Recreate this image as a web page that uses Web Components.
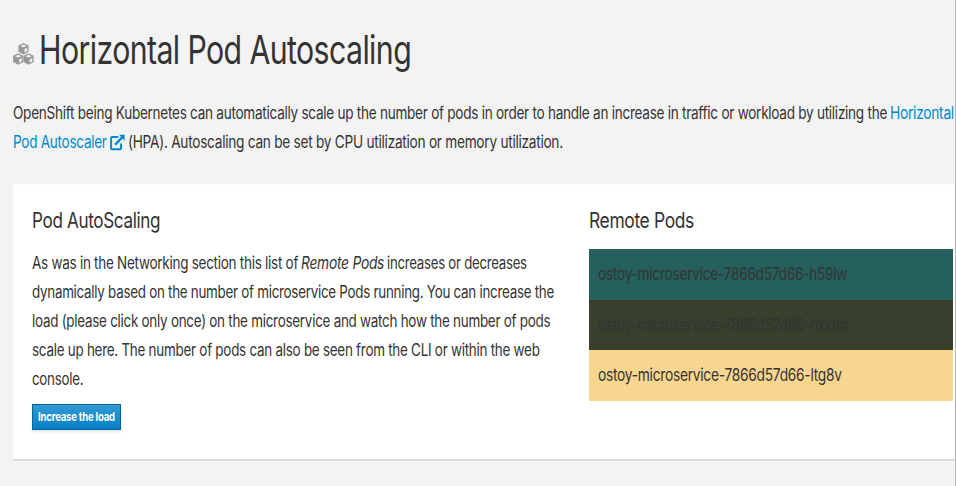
<!DOCTYPE html>
<html lang="en"><head><meta charset="utf-8"><title>Horizontal Pod Autoscaling</title>
<style>
html,body{margin:0;height:100%}
body{overflow:hidden;background:#f3f3f3;color:#333;font-family:Inter,"Liberation Sans",sans-serif}
</style></head><body>
<hpa-page></hpa-page>
<script>
// A run of text condensed horizontally to the width given in its "w" attribute.
class FitText extends HTMLElement{
  connectedCallback(){
    const r=this.attachShadow({mode:'open'});
    r.innerHTML='<style>:host{display:block;flex:none;white-space:nowrap;letter-spacing:-.02em}span{display:inline-block;transform-origin:0 50%}</style><span><slot></slot></span>';
    const w=parseFloat(this.getAttribute('w')),s=r.querySelector('span');
    this.style.width=w+'px';
    s.style.transform='scaleX('+w/s.offsetWidth+')';
  }
}
class CubesIcon extends HTMLElement{
  connectedCallback(){
    this.attachShadow({mode:'open'}).innerHTML=`<style>:host{display:block;flex:none}svg{display:block}</style>
<svg width="21" height="23" viewBox="0 0 21 23"><defs><g id="c"><path d="M5.2 0 10.3 2.4V8.8L5.2 11.5.1 8.8V2.4Z" fill="#989898"/><path d="M5.2 1.5 8.2 2.9 5.2 4.2 2.2 2.9Z" fill="#f3f3f3"/><path d="M6.2 6.1 8.9 4.8V7.9L6.2 9.4Z" fill="#f3f3f3"/></g></defs><use href="#c" x="5.3"/><use href="#c" y="10.3"/><use href="#c" x="10.4" y="10.3"/></svg>`;
  }
}
class ExternalIcon extends HTMLElement{
  connectedCallback(){
    this.attachShadow({mode:'open'}).innerHTML=`<style>:host{display:block;flex:none}svg{display:block}</style>
<svg width="15" height="17" viewBox="0 0 15 17" fill="none" stroke="#0088ce"><path d="M8.2 3H2.2Q1.1 3 1.1 4.2V14Q1.1 15.2 2.2 15.2H10Q11.1 15.2 11.1 14V9.6" stroke-width="2"/><path d="M5.1 10.8 12.3 3.1" stroke-width="2.4"/><path d="M9.1 .7H14.6V6.8Z" fill="#0088ce" stroke="none"/></svg>`;
  }
}
class PodRow extends HTMLElement{
  connectedCallback(){
    this.attachShadow({mode:'open'}).innerHTML=`<style>:host{display:block;box-sizing:border-box;padding-left:9px;font-size:17px;line-height:51px;background:var(--pod)}</style><slot></slot>`;
  }
}
class LoadButton extends HTMLElement{
  connectedCallback(){
    this.attachShadow({mode:'open'}).innerHTML=`<style>:host{display:block}button{display:block;box-sizing:border-box;width:89px;height:26px;padding:0 0 0 5px;border:1px solid #00659c;background:linear-gradient(#319bd6,#0580c6);color:#fff;font:700 11.8px/23px Inter,sans-serif;text-align:left;box-shadow:0 2px 3px rgba(3,3,3,.1)}</style><button><slot></slot></button>`;
  }
}
class InfoCard extends HTMLElement{
  connectedCallback(){
    this.attachShadow({mode:'open'}).innerHTML=`<style>:host{display:grid;grid-template-columns:556.5px 364px;box-sizing:border-box;width:942px;height:277px;padding:19px 0 0 19px;background:#fff;border-top:1px solid #fafafa;border-bottom:2px solid #dcdcdc;align-items:start}</style><slot name="left"></slot><slot name="right"></slot>`;
  }
}
class HpaPage extends HTMLElement{
  connectedCallback(){
    this.attachShadow({mode:'open'}).innerHTML=`<style>
:host{display:block;box-sizing:border-box;height:486px;padding:26px 0 0 13px;border-right:1px solid #b5b5b5;overflow:hidden}
h1,h2,p{margin:0;font-weight:400}
h1{display:flex;align-items:flex-start;gap:5px;height:73px;font-size:39px;line-height:47px}
cubes-icon{margin-top:17px}
.line{display:flex;gap:3px}
.intro{height:85px;font-size:17px;line-height:28.5px}
a{color:#0088ce;text-decoration:none;display:flex;gap:3px}
external-icon{margin-top:6px}
h2{font-size:21.5px;line-height:32px;height:45px}
.body{font-size:17px;line-height:29.1px}
.body .line{gap:3px}
i{font-style:italic}
load-button{margin-top:10px}
</style>
<h1><cubes-icon></cubes-icon><fit-text w="372">Horizontal Pod Autoscaling</fit-text></h1>
<div class="intro"><div class="line"><fit-text w="874">OpenShift being Kubernetes can automatically scale up the number of pods in order to handle an increase in traffic or workload by utilizing the</fit-text><a><fit-text w="64">Horizontal</fit-text></a></div>
<div class="line"><a><fit-text w="94">Pod Autoscaler</fit-text><external-icon></external-icon></a><fit-text w="434.5">(HPA). Autoscaling can be set by CPU utilization or memory utilization.</fit-text></div></div>
<info-card>
<div slot="left"><h2><fit-text w="128">Pod AutoScaling</fit-text></h2>
<div class="body">
<div class="line"><fit-text w="266">As was in the Networking section this list of</fit-text><fit-text w="83"><i>Remote Pods</i></fit-text><fit-text w="140">increases or decreases</fit-text></div>
<fit-text w="522">dynamically based on the number of microservice Pods running. You can increase the</fit-text>
<fit-text w="518">load (please click only once) on the microservice and watch how the number of pods</fit-text>
<fit-text w="508">scale up here. The number of pods can also be seen from the CLI or within the web</fit-text>
<fit-text w="51">console.</fit-text></div>
<load-button><fit-text w="77">Increase the load</fit-text></load-button></div>
<div slot="right"><h2><fit-text w="104.5">Remote Pods</fit-text></h2>
<div>
<pod-row style="--pod:#25605d;height:51px"><fit-text w="249">ostoy-microservice-7866d57d66-h59lw</fit-text></pod-row>
<pod-row style="--pod:#383f2d;height:50px"><fit-text w="250">ostoy-microservice-7866d57d66-hxktm</fit-text></pod-row>
<pod-row style="--pod:#f9d68f;height:51px"><fit-text w="244">ostoy-microservice-7866d57d66-ltg8v</fit-text></pod-row>
</div></div>
</info-card>`;
  }
}
customElements.define('fit-text',FitText);
customElements.define('cubes-icon',CubesIcon);
customElements.define('external-icon',ExternalIcon);
customElements.define('pod-row',PodRow);
customElements.define('load-button',LoadButton);
customElements.define('info-card',InfoCard);
customElements.define('hpa-page',HpaPage);
</script></body></html>
